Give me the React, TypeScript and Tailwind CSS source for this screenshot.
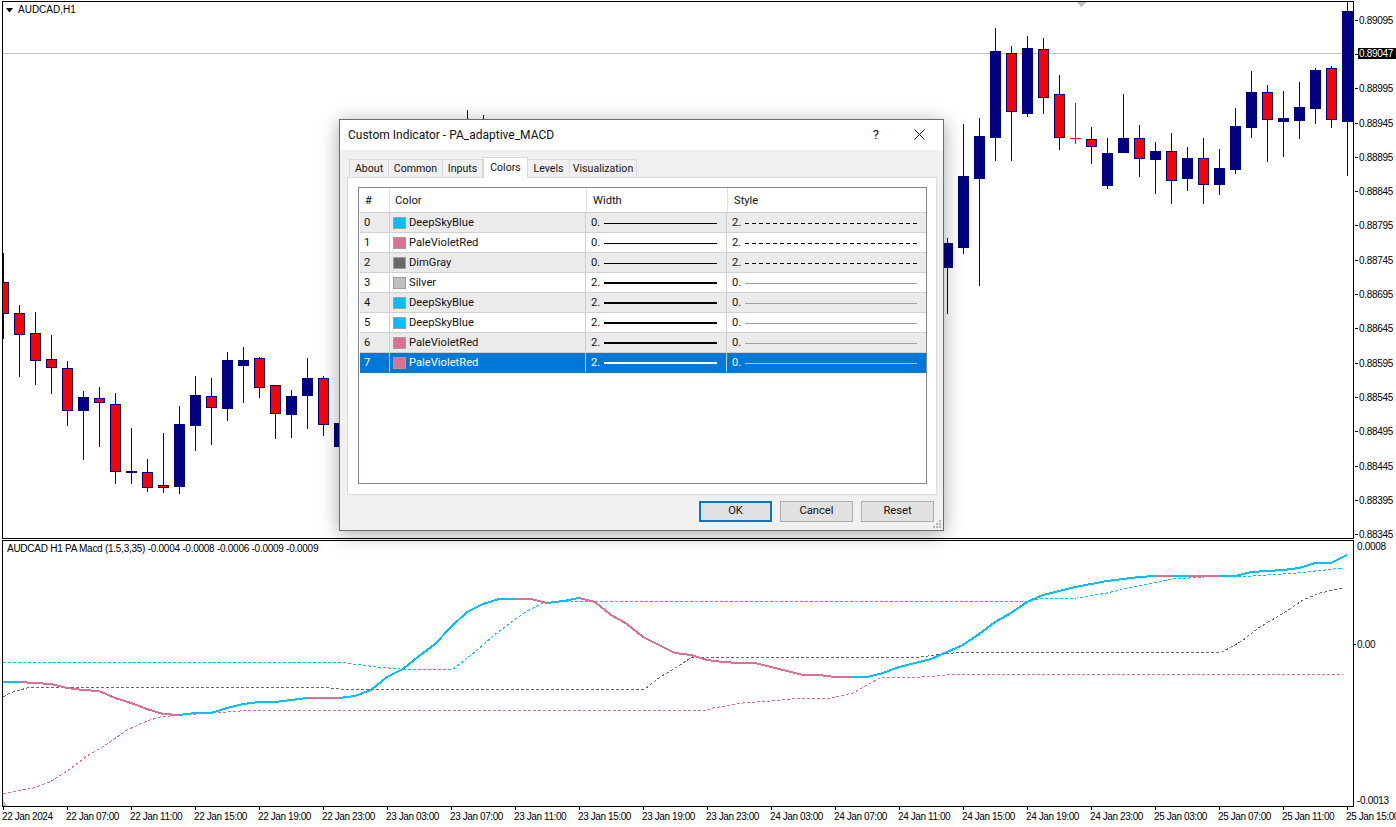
import React from "react"

type Candle = [number, number, number, number, number, "b" | "r"]

// n, high, body top, body bottom, low, colour. x = 3 + 16n
const candles: Candle[] = [
  [0, 253, 282, 313, 339, "r"], [1, 305, 313, 334, 377, "r"], [2, 312, 333, 360, 385, "r"], [3, 335, 359, 367, 394, "r"],
  [4, 361, 368, 410, 426, "r"], [5, 391, 397, 410, 460, "b"], [6, 387, 398, 402, 447, "r"], [7, 393, 404, 471, 484, "r"],
  [8, 428, 471, 472, 484, "b"], [9, 459, 472, 487, 492, "r"], [10, 433, 485, 487, 493, "r"], [11, 406, 424, 486, 494, "b"],
  [12, 376, 395, 425, 451, "b"], [13, 378, 396, 407, 445, "r"], [14, 352, 360, 408, 421, "b"], [15, 347, 360, 365, 403, "b"],
  [16, 357, 358, 387, 398, "r"], [17, 385, 385, 413, 439, "r"], [18, 390, 396, 414, 438, "b"], [19, 358, 378, 395, 429, "b"],
  [20, 376, 378, 424, 436, "r"], [21, 410, 423, 446, 460, "b"], [29, 110, 125, 160, 170, "b"], [30, 115, 125, 160, 170, "b"],
  [59, 238, 243, 267, 314, "b"], [60, 124, 176, 247, 254, "b"], [61, 118, 136, 178, 286, "b"], [62, 28, 51, 137, 161, "b"],
  [63, 46, 53, 111, 161, "r"], [64, 36, 48, 113, 117, "b"], [65, 38, 49, 97, 114, "r"], [66, 75, 94, 137, 150, "r"],
  [68, 127, 139, 146, 164, "r"], [69, 138, 153, 185, 189, "b"], [70, 94, 138, 152, 152, "b"], [71, 125, 138, 158, 177, "r"],
  [72, 142, 151, 159, 194, "b"], [73, 133, 151, 180, 204, "r"], [74, 147, 158, 178, 191, "b"], [75, 138, 158, 184, 204, "r"],
  [76, 149, 168, 184, 195, "b"], [77, 108, 126, 169, 174, "b"], [78, 71, 92, 127, 138, "b"], [79, 85, 92, 119, 162, "r"],
  [80, 91, 118, 121, 157, "b"], [81, 82, 107, 120, 139, "b"], [82, 68, 70, 108, 124, "b"], [83, 66, 68, 119, 128, "r"],
  [84, 2, 11, 121, 176, "b"],
]

// main line y per bar
const macd = [
  682, 682, 683, 684, 688, 690, 691, 698, 703, 709, 714, 715, 713, 713, 708, 704, 702, 702, 700, 698, 698, 698, 696, 690,
  677, 669, 656, 644, 627, 612, 604, 599, 599, 599, 603, 601, 598, 602, 615, 624, 637, 645, 653, 655, 660, 662, 663, 663,
  667, 671, 675, 675, 677, 677, 677, 673, 667, 663, 659, 652, 645, 634, 622, 613, 602, 595, 591, 587, 584, 581, 579, 577,
  576, 576, 576, 576, 576, 576, 572, 571, 570, 568, 563, 563, 555,
]

const pinkRuns = [[1, 11], [19, 21], [32, 34], [36, 53], [72, 73], [74, 76]]

const blueBand = "3,662 343,662 353,664 377,667 400,669 453,669 460,664 477,650 493,636 510,623 527,611 543,603 573,601 1030,601 1040,599 1077,598 1107,593 1133,587 1173,579 1220,576 1253,576 1297,573 1343,568"
const grayBand = "3,697 10,693 27,688 43,687 317,687 330,688 340,689 645,689 660,677 677,667 692,657 920,657 953,653 1222,652 1242,641 1257,629 1270,621 1287,611 1303,600 1320,593 1343,588"
const pinkBand = "3,794 17,791 33,788 50,782 70,769 87,756 107,744 127,730 147,721 160,717 180,715 213,713 240,711 707,710 713,708 743,703 770,701 800,698 830,698 853,693 867,685 882,677 920,677 937,676 953,674 1343,674"

const prices = ["0.89095", "0.89047", "0.88995", "0.88945", "0.88895", "0.88845", "0.88795", "0.88745", "0.88695", "0.88645", "0.88595", "0.88545", "0.88495", "0.88445", "0.88395", "0.88345"]

const times = [
  "22 Jan 2024", "22 Jan 07:00", "22 Jan 11:00", "22 Jan 15:00", "22 Jan 19:00", "22 Jan 23:00", "23 Jan 03:00", "23 Jan 07:00",
  "23 Jan 11:00", "23 Jan 15:00", "23 Jan 19:00", "23 Jan 23:00", "24 Jan 03:00", "24 Jan 07:00", "24 Jan 11:00", "24 Jan 15:00",
  "24 Jan 19:00", "24 Jan 23:00", "25 Jan 03:00", "25 Jan 07:00", "25 Jan 11:00", "25 Jan 15:00",
]

const rows = [
  { name: "DeepSkyBlue", color: "#00bfff", width: 0, style: 2 },
  { name: "PaleVioletRed", color: "#db7093", width: 0, style: 2 },
  { name: "DimGray", color: "#696969", width: 0, style: 2 },
  { name: "Silver", color: "#c0c0c0", width: 2, style: 0 },
  { name: "DeepSkyBlue", color: "#00bfff", width: 2, style: 0 },
  { name: "DeepSkyBlue", color: "#00bfff", width: 2, style: 0 },
  { name: "PaleVioletRed", color: "#db7093", width: 2, style: 0 },
  { name: "PaleVioletRed", color: "#db7093", width: 2, style: 0 },
]

const tabs = [
  { label: "About", w: "w-[40px]" },
  { label: "Common", w: "w-[54px]" },
  { label: "Inputs", w: "w-[40px]" },
  { label: "Colors", w: "w-[45px]", active: true },
  { label: "Levels", w: "w-[42px]" },
  { label: "Visualization", w: "w-[67px]" },
]

function barX(n: number) {
  return 3 + 16 * n
}

function Candles() {
  return (
    <svg width="1350" height="536" viewBox="3 2 1350 536" shapeRendering="crispEdges" className="block">
      <rect x="3" y="53" width="1350" height="1" fill="#c0c0c0" />
      <polygon points="1077,2 1086,2 1081.5,7" fill="#c0c0c0" />
      {candles.map(([n, high, top, bottom, low, kind]) => {
        const x = barX(n)
        return (
          <g key={n}>
            <rect x={x} y={high} width="1" height={low - high} fill="#000080" />
            <rect x={x - 5} y={top} width="11" height={bottom - top + 1} fill="#000080" />
            {kind === "r" && bottom - top > 1 && (
              <rect x={x - 4} y={top + 1} width="9" height={bottom - top - 1} fill="#ff0000" />
            )}
          </g>
        )
      })}
      <rect x="1075" y="103" width="1" height="41" fill="#ff0000" />
      <rect x="1070" y="138" width="11" height="1" fill="#ff0000" />
    </svg>
  )
}

function Macd() {
  const line = (from: number, to: number) =>
    macd
      .slice(from, to + 1)
      .map((y, i) => `${barX(from + i)},${y}`)
      .join(" ")
  return (
    <svg width="1350" height="265" viewBox="3 541 1350 265" shapeRendering="crispEdges" className="block">
      <polyline points={blueBand} fill="none" stroke="#00bfff" strokeDasharray="3 2" />
      <polyline points={grayBand} fill="none" stroke="#696969" strokeDasharray="3 2" />
      <polyline points={pinkBand} fill="none" stroke="#db7093" strokeDasharray="3 2" />
      <polyline points={line(0, 84)} fill="none" stroke="#00bfff" strokeWidth="2" />
      {pinkRuns.map(([a, b]) => (
        <polyline key={a} points={line(a, b)} fill="none" stroke="#db7093" strokeWidth="2" />
      ))}
    </svg>
  )
}

function SampleLine({ kind, thick, selected }: { kind: "solid" | "dash" | "thin"; thick?: boolean; selected?: boolean }) {
  if (kind === "dash") {
    return (
      <svg width="172" height="1" className="block">
        <line x1="0" y1="0.5" x2="172" y2="0.5" stroke="#000" strokeDasharray="4 3" />
      </svg>
    )
  }
  if (kind === "thin") {
    return <div className={`h-px w-[172px] ${selected ? "bg-[#a9c4de]" : "bg-[#a0a0a0]"}`} />
  }
  return <div className={`${thick ? "h-[2px]" : "h-px"} w-[113px] ${selected ? "bg-white" : "bg-black"}`} />
}

function ColorsTable() {
  return (
    <div className="w-[569px] h-[297px] border border-[#828790] bg-white text-[11.2px] text-[#111]">
      <div className="flex h-[25px] border-b border-[#d0d0d0]">
        <div className="w-[31px] pl-[6px] pt-[2px] flex items-center border-r border-[#e3e3e3]">#</div>
        <div className="w-[197px] pl-[5px] pt-[2px] flex items-center border-r border-[#e3e3e3]">Color</div>
        <div className="w-[141px] pl-[6px] pt-[2px] flex items-center border-r border-[#e3e3e3]">Width</div>
        <div className="flex-1 pl-[6px] pt-[2px] flex items-center">Style</div>
      </div>
      <div className="pl-px">
        {rows.map((row, i) => {
          const selected = i === 7
          const bg = selected ? "bg-[#0078d7] text-white" : i % 2 === 0 ? "bg-[#ebebeb]" : "bg-white"
          return (
            <div key={i} className={`flex h-[20px] border-b ${selected ? "border-[#0078d7]" : "border-[#d0d0d0]"} ${bg}`}>
              <div className="w-[30px] pl-[4px] pt-px flex items-center border-r border-[#d0d0d0]">{i}</div>
              <div className="w-[196px] pl-[3px] pt-px flex items-center gap-[3px] border-r border-[#d0d0d0]">
                <div className="w-[13px] h-[12px] border border-[#a0a0a0]" style={{ backgroundColor: row.color }} />
                <span>{row.name}</span>
              </div>
              <div className="w-[141px] pl-[5px] pt-px flex items-center border-r border-[#d0d0d0]">
                <span className="w-[13px]">{row.width}.</span>
                <SampleLine kind="solid" thick={row.width === 2} selected={selected} />
              </div>
              <div className="flex-1 pl-[5px] pt-px flex items-center">
                <span className="w-[13px]">{row.style}.</span>
                <SampleLine kind={row.style === 2 ? "dash" : "thin"} selected={selected} />
              </div>
            </div>
          )
        })}
      </div>
    </div>
  )
}

function Dialog() {
  return (
    <div className="absolute left-[339px] top-[119px] w-[605px] h-[412px] border border-[#6e6e6e] bg-[#f0f0f0] shadow-[0_3px_18px_rgba(0,0,0,0.35)] flex flex-col font-['Roboto',sans-serif] text-[#111]">
      <div className="h-[30px] bg-white flex items-center pl-[8px] text-[12px]">
        <span>Custom Indicator - PA_adaptive_MACD</span>
        <span className="ml-auto mr-[35px] text-[13px]">?</span>
        <svg width="11" height="11" viewBox="0 0 11 11" className="mr-[18px] -mt-px">
          <path d="M0.5 0.5 L10.5 10.5 M10.5 0.5 L0.5 10.5" stroke="#111" strokeWidth="1" fill="none" />
        </svg>
      </div>
      <div className="flex items-end h-[27px] pl-[9px] text-[10.6px]">
        {tabs.map((tab) => (
          <div
            key={tab.label}
            className={`${tab.w} flex items-center justify-center border-t border-r border-[#d9d9d9] ${
              tab.active ? "h-[21px] bg-white border-l -mb-px relative z-10 pb-px" : "h-[18px] pt-px bg-[#f0f0f0] first:border-l"
            }`}
          >
            {tab.label}
          </div>
        ))}
      </div>
      <div className="mx-[7px] w-[590px] h-[318px] border border-[#dcdcdc] bg-white pl-[10px] pt-[9px]">
        <ColorsTable />
      </div>
      <div className="flex justify-end gap-[8px] pr-[9px] pt-[6px] text-[11.2px]">
        <button className="w-[73px] h-[21px] border-2 border-[#0078d7] bg-[#e1e1e1]">OK</button>
        <button className="w-[73px] h-[21px] border border-[#adadad] bg-[#e1e1e1]">Cancel</button>
        <button className="w-[73px] h-[21px] border border-[#adadad] bg-[#e1e1e1]">Reset</button>
      </div>
      <svg width="8" height="8" viewBox="0 0 8 8" className="absolute right-[2px] bottom-[2px]">
        <path d="M6 0h2v2H6zM3 3h2v2H3zM6 3h2v2H6zM0 6h2v2H0zM3 6h2v2H3zM6 6h2v2H6z" fill="#b4b4b4" />
      </svg>
    </div>
  )
}

export default function App() {
  return (
    <div className="relative w-[1396px] h-[827px] bg-white overflow-hidden font-['Liberation_Sans',sans-serif] text-[10px] text-black">
      {/* price pane */}
      <div className="flex pl-[2px] pt-px h-[539px]">
        <div className="relative w-[1352px] h-[538px] border border-black shrink-0">
          <Candles />
          <div className="absolute left-[3px] top-[2px] flex items-center gap-[5px] leading-[12px]">
            <svg width="7" height="5" viewBox="0 0 7 5">
              <path d="M0 0h7L3.5 4.5z" fill="#000" />
            </svg>
            <span>AUDCAD,H1</span>
          </div>
        </div>
        <div className="flex-1 pt-[2px] tracking-[-0.3px]">
          {prices.map((p, i) => (
            <div key={p} className="h-[34.3px] flex items-center">
              <div className="w-[3px] h-px bg-black ml-px" />
              <span className={i === 1 ? "bg-black text-white h-[11px] leading-[11px] pl-[1px] flex-1 -translate-y-px" : "pl-[1px]"}>{p}</span>
            </div>
          ))}
        </div>
      </div>
      {/* indicator pane */}
      <div className="flex pl-[2px] mt-px">
        <div className="relative w-[1352px] h-[267px] border border-black shrink-0">
          <Macd />
          <div className="absolute left-[4px] top-[2px] leading-[12px] tracking-[-0.26px]">
            AUDCAD H1 PA Macd (1.5,3,35) -0.0004 -0.0008 -0.0006 -0.0009 -0.0009
          </div>
          <div className="absolute left-0 bottom-0 w-0 h-0 border-l-[5px] border-t-[5px] border-l-[#c0c0c0] border-t-transparent" />
        </div>
        <div className="flex-1 flex flex-col pl-[3px] pt-px tracking-[-0.3px]">
          <div className="h-[12px] leading-[12px]">0.0008</div>
          <div className="h-[12px] leading-[12px] mt-[86px] relative">
            0.00
            <div className="absolute left-[-3px] top-[5px] w-[2px] h-px bg-black" />
          </div>
          <div className="h-[12px] leading-[12px] mt-[144px]">-0.0013</div>
        </div>
      </div>
      {/* time axis */}
      <div className="flex pl-[3px] tracking-[-0.4px]">
        {times.map((t) => (
          <div key={t} className="w-[64px] shrink-0">
            <div className="w-px h-[3px] bg-black" />
            <div className="-ml-px whitespace-nowrap leading-[12px] mt-[1px]">{t}</div>
          </div>
        ))}
      </div>
      <Dialog />
    </div>
  )
}
